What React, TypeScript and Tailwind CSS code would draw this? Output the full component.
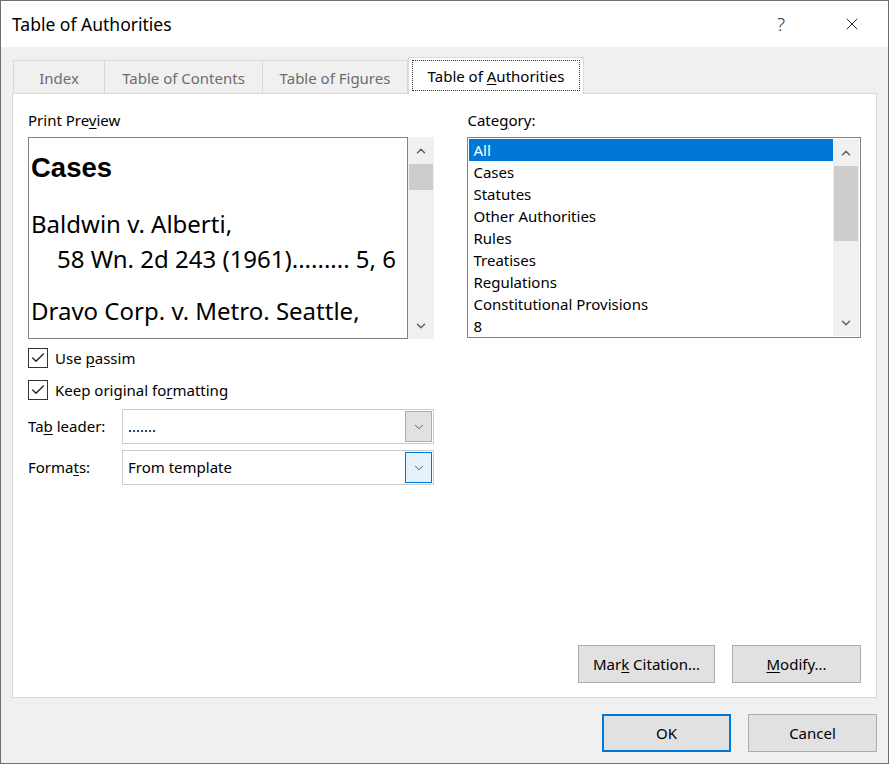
import { Check, ChevronDown, ChevronUp, X } from "lucide-react";

const categories = [
  "All",
  "Cases",
  "Statutes",
  "Other Authorities",
  "Rules",
  "Treatises",
  "Regulations",
  "Constitutional Provisions",
  "8",
];

function ScrollBar({ thumbHeight }: { thumbHeight: string }) {
  return (
    <div className="w-[26px] bg-[#f0f0f0] flex flex-col items-center shrink-0">
      <div className="h-[27px] w-full flex items-center justify-center">
        <ChevronUp className="w-[14px] h-[14px] text-[#606060]" strokeWidth={2.5} />
      </div>
      <div className="flex-1 w-full px-px">
        <div className={`w-full bg-[#cdcdcd] ${thumbHeight}`} />
      </div>
      <div className="h-[27px] w-full flex items-center justify-center">
        <ChevronDown className="w-[14px] h-[14px] text-[#606060]" strokeWidth={2.5} />
      </div>
    </div>
  );
}

function CheckRow({ children }: { children: React.ReactNode }) {
  return (
    <div className="flex items-center gap-[7px] h-[22px]">
      <div className="w-[20px] h-[20px] border border-[#333] bg-white flex items-center justify-center">
        <Check className="w-[16px] h-[16px] text-[#222]" strokeWidth={2} />
      </div>
      <span>{children}</span>
    </div>
  );
}

function Combo({ value, focused }: { value: string; focused?: boolean }) {
  return (
    <div className="flex-1 h-[35px] border border-[#cccccc] bg-white flex items-center">
      <span className="flex-1 pl-[5px]">{value}</span>
      <div
        className={`w-[27px] h-[31px] mr-px flex items-center justify-center border ${
          focused ? "bg-[#e5f1fb] border-[#0078d7]" : "bg-[#e1e1e1] border-[#adadad]"
        }`}
      >
        <ChevronDown className="w-[14px] h-[14px] text-[#444]" strokeWidth={1.5} />
      </div>
    </div>
  );
}

function Button({ children, primary, className }: { children: React.ReactNode; primary?: boolean; className?: string }) {
  return (
    <button
      type="button"
      className={`h-[38px] bg-[#e1e1e1] flex items-center justify-center ${
        primary ? "border-2 border-[#0078d7]" : "border border-[#adadad]"
      } ${className ?? ""}`}
    >
      {children}
    </button>
  );
}

export default function App() {
  return (
    <div className="w-[890px] h-[765px] bg-white">
      <div
        className="w-[889px] h-[764px] border border-[#707070] flex flex-col text-[15px] text-black"
        style={{ fontFamily: '"Noto Sans", "Open Sans", sans-serif' }}
      >
        {/* Title bar */}
        <div className="h-[46px] bg-white flex items-center shrink-0">
          <span className="pl-[11px] text-[17.5px] flex-1 pt-[1px]">Table of Authorities</span>
          <span className="text-[19px] text-[#333] mr-[57px] font-light">?</span>
          <X className="w-[20px] h-[20px] text-[#333] mr-[26px]" strokeWidth={1.2} />
        </div>

        {/* Body */}
        <div className="flex-1 bg-[#f0f0f0] flex flex-col pl-[11px] pr-[11px]">
          {/* Tabs */}
          <div className="flex items-end h-[46px] pl-px">
            <div className="w-[91px] h-[33px] pt-[2px] border-t border-l border-[#d9d9d9] bg-[#f0f0f0] flex items-center justify-center text-[#6d6d6d]">
              Index
            </div>
            <div className="w-[158px] h-[33px] pt-[2px] border-t border-l border-[#d9d9d9] bg-[#f0f0f0] flex items-center justify-center text-[#6d6d6d]">
              Table of Contents
            </div>
            <div className="w-[146px] h-[33px] pt-[2px] border-t border-l border-r border-[#d9d9d9] bg-[#f0f0f0] flex items-center justify-center text-[#6d6d6d]">
              Table of Figures
            </div>
            <div className="w-[176px] h-[37px] -mb-px relative z-10 border-t border-l border-r border-[#d9d9d9] bg-white flex items-center justify-center px-[3px] pt-[2px] pb-[3px]">
              <div className="w-full h-full pt-[2px] border border-dotted border-[#333] flex items-center justify-center whitespace-pre">
                Table of{" "}
                <u className="underline-offset-2">A</u>uthorities
              </div>
            </div>
          </div>

          {/* Panel */}
          <div className="w-[865px] h-[605px] bg-white border border-[#d9d9d9] flex flex-col px-[15px] pt-[15px] pb-[14px]">
            <div className="flex gap-[33px]">
              {/* Left column */}
              <div className="w-[408px] flex flex-col">
                <div className="h-[22px] leading-[22px]">
                  Print Pre<u className="underline-offset-2">v</u>iew
                </div>
                <div className="flex h-[202px] mt-[6px]">
                  <div className="flex-1 border border-[#828282] overflow-hidden pl-[2px]">
                    <div
                      className="text-[27.5px] font-bold leading-[30px] mt-[15px]"
                      style={{ fontFamily: '"Liberation Sans", Arial, sans-serif' }}
                    >
                      Cases
                    </div>
                    <div className="text-[24px] leading-[35px] mt-[23px] whitespace-nowrap">
                      <div>Baldwin v. Alberti,</div>
                      <div className="pl-[26px]">58 Wn. 2d 243 (1961)......... 5, 6</div>
                      <div className="mt-[17px]">Dravo Corp. v. Metro. Seattle,</div>
                      <div className="pl-[26px] mt-[3px]">84 Wn. 2d 214 (1974)......... 4, 8</div>
                    </div>
                  </div>
                  <ScrollBar thumbHeight="h-[26px]" />
                </div>

                <div className="flex flex-col gap-[10px] mt-[8px]">
                  <CheckRow>
                    Use <u className="underline-offset-2">p</u>assim
                  </CheckRow>
                  <CheckRow>
                    Keep original fo<u className="underline-offset-2">r</u>matting
                  </CheckRow>
                </div>

                <div className="flex items-center mt-[8px]">
                  <span className="w-[94px]">
                    Ta<u className="underline-offset-2">b</u> leader:
                  </span>
                  <Combo value="......." />
                </div>
                <div className="flex items-center mt-[6px]">
                  <span className="w-[94px]">
                    Forma<u className="underline-offset-2">t</u>s:
                  </span>
                  <Combo value="From template" focused />
                </div>
              </div>

              {/* Right column */}
              <div className="w-[395px] flex flex-col">
                <div className="h-[22px] leading-[22px]">
                  Cate<u className="underline-offset-2">g</u>ory:
                </div>
                <div className="flex h-[201px] mt-[6px] border border-[#828282] p-px">
                  <div className="flex-1 flex flex-col">
                    {categories.map((c, i) => (
                      <div
                        key={c}
                        className={`h-[22px] leading-[22px] pl-[4px] ${
                          i === 0 ? "bg-[#0078d7] text-white" : ""
                        }`}
                      >
                        {c}
                      </div>
                    ))}
                  </div>
                  <ScrollBar thumbHeight="h-[75px]" />
                </div>
              </div>
            </div>

            <div className="mt-auto flex justify-end gap-[17px]">
              <Button className="w-[137px]">
                Mar<u className="underline-offset-2">k</u>&nbsp;Citation...
              </Button>
              <Button className="w-[129px]">
                <u className="underline-offset-2">M</u>odify...
              </Button>
            </div>
          </div>

          {/* Dialog buttons */}
          <div className="flex justify-end gap-[17px] mt-[16px]">
            <Button primary className="w-[129px]">
              OK
            </Button>
            <Button className="w-[129px]">Cancel</Button>
          </div>
        </div>
      </div>
    </div>
  );
}
